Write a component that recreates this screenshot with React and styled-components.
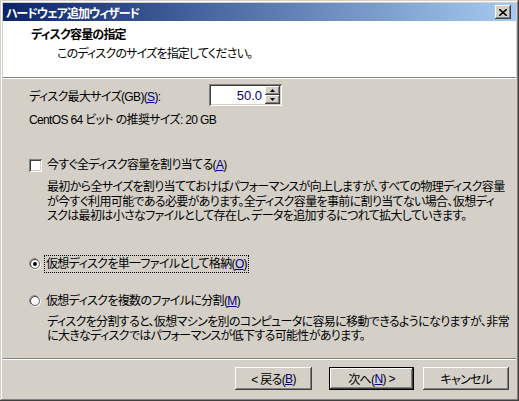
import React from 'react'
import styled, { createGlobalStyle, css } from 'styled-components'

const GlobalStyle = createGlobalStyle`
  html, body {
    margin: 0;
    padding: 0;
    background: #d4d0c8;
  }
  body {
    font-family: "Liberation Sans", "Noto Sans CJK JP", sans-serif;
    font-size: 12px;
    color: #000;
  }
`

const jp = css`
  font-family: "Liberation Sans", "Noto Sans CJK JP", sans-serif;
  font-feature-settings: "palt";
  font-size: 12px;
  letter-spacing: -0.65px;
  white-space: nowrap;
`

const Window = styled.div`
  width: 519px;
  height: 401px;
  box-sizing: border-box;
  padding: 3px;
  background: #d4d0c8;
  display: flex;
  flex-direction: column;
  box-shadow: inset -1px -1px #404040, inset 1px 1px #d4d0c8,
    inset -2px -2px #808080, inset 2px 2px #ffffff;
`

const TitleBar = styled.div`
  height: 18px;
  display: flex;
  align-items: center;
  justify-content: space-between;
  padding: 0 5px 0 3px;
  background: linear-gradient(to right, #0a246a, #a6caf0);
  color: #fff;
  font-weight: bold;
  ${jp};
  letter-spacing: -1px;
`

const CloseButton = styled.div`
  width: 16px;
  height: 14px;
  box-sizing: border-box;
  background: #d4d0c8;
  display: flex;
  align-items: center;
  justify-content: center;
  box-shadow: inset -1px -1px #404040, inset 1px 1px #ffffff,
    inset -2px -2px #808080;
`

const Header = styled.div`
  height: 56px;
  box-sizing: border-box;
  background: #fff;
  padding: 6px 0 0 28px;
  ${jp};
  letter-spacing: -0.8px;
`

const HeaderTitle = styled.div`
  font-weight: bold;
  line-height: 16px;
`

const HeaderSub = styled.div`
  margin: 3px 0 0 26px;
  line-height: 16px;
`

const Rule = styled.div`
  height: 0;
  border-top: 1px solid #808080;
  border-bottom: 1px solid #ffffff;
`

const Body = styled.div`
  flex: 1;
  display: flex;
  flex-direction: column;
  padding-left: 26px;
  ${jp};
`

const SizeRow = styled.div`
  margin-top: 5px;
  height: 22px;
  display: flex;
  align-items: center;
`

const SizeLabel = styled.span`
  width: 180px;
`

const SpinBox = styled.div`
  width: 73px;
  height: 22px;
  box-sizing: border-box;
  background: #fff;
  display: flex;
  align-items: center;
  padding: 2px;
  box-shadow: inset 1px 1px #808080, inset -1px -1px #ffffff,
    inset 2px 2px #404040, inset -2px -2px #d4d0c8;
`

const SpinValue = styled.span`
  flex: 1;
  text-align: right;
  padding-right: 3px;
  font-size: 13px;
  letter-spacing: 0;
  color: #000080;
`

const SpinButtons = styled.div`
  display: flex;
  flex-direction: column;
  width: 15px;
  height: 18px;
`

const SpinButton = styled.div`
  flex: 1;
  background: #d4d0c8;
  display: flex;
  align-items: center;
  justify-content: center;
  box-shadow: inset -1px -1px #404040, inset 1px 1px #ffffff,
    inset -2px -2px #808080;
`

const Line = styled.div`
  margin-top: ${(p) => p.$top || 0}px;
  line-height: 14px;
`

const OptionRow = styled.div`
  margin-top: ${(p) => p.$top}px;
  height: 18px;
  display: flex;
  align-items: center;
  gap: 3px;
`

const CheckBox = styled.div`
  width: 13px;
  height: 13px;
  box-sizing: border-box;
  background: #fff;
  box-shadow: inset 1px 1px #808080, inset -1px -1px #ffffff,
    inset 2px 2px #404040, inset -2px -2px #d4d0c8;
`

const OptionLabel = styled.span`
  line-height: 16px;
  padding: 0 1px;
  border: 1px dotted ${(p) => (p.$focus ? '#000' : 'transparent')};
`

const Desc = styled.div`
  margin: ${(p) => p.$top}px 0 0 18px;
  line-height: ${(p) => p.$lh}px;
`

const Key = styled.u`
  color: #000080;
`

const Footer = styled.div`
  height: 40px;
  display: flex;
  flex-direction: column;
`

const ButtonRow = styled.div`
  margin-top: 7px;
  display: flex;
  justify-content: flex-end;
  padding-right: 7px;
`

const Button = styled.div`
  width: ${(p) => p.$w}px;
  margin-left: ${(p) => p.$ml || 0}px;
  height: 23px;
  box-sizing: border-box;
  display: flex;
  align-items: center;
  justify-content: center;
  ${jp};
  background: #d4d0c8;
  box-shadow: ${(p) =>
    p.$default
      ? 'inset 0 0 0 1px #000, inset -2px -2px #404040, inset 2px 2px #ffffff, inset -3px -3px #808080'
      : 'inset -1px -1px #404040, inset 1px 1px #ffffff, inset -2px -2px #808080'};
`

const Radio = ({ checked }) => (
  <svg width="12" height="12" viewBox="0 0 12 12">
    <path d="M1.5 8.5 A5 5 0 0 1 8.5 1.5" stroke="#808080" strokeWidth="1" fill="none" />
    <path d="M10.5 3.5 A5 5 0 0 1 3.5 10.5" stroke="#ffffff" strokeWidth="1" fill="none" />
    <circle cx="6" cy="6" r="4.5" fill="#fff" stroke="#404040" strokeWidth="1" />
    <path d="M9.2 3.6 A4 4 0 0 1 3.6 9.2" stroke="#d4d0c8" strokeWidth="1" fill="none" />
    {checked && <circle cx="6" cy="6" r="2" fill="#000" />}
  </svg>
)

const Arrow = ({ up }) => (
  <svg width="5" height="3" viewBox="0 0 5 3">
    <path d={up ? 'M0 3 L2.5 0 L5 3 Z' : 'M0 0 L5 0 L2.5 3 Z'} fill="#000" />
  </svg>
)

export default function App() {
  return (
    <>
      <GlobalStyle />
      <Window>
        <TitleBar>
          <span>ハードウェア追加ウィザード</span>
          <CloseButton>
            <svg width="8" height="7" viewBox="0 0 8 7">
              <path d="M0 0 L8 7 M8 0 L0 7" stroke="#000" strokeWidth="1.6" />
            </svg>
          </CloseButton>
        </TitleBar>
        <Header>
          <HeaderTitle>ディスク容量の指定</HeaderTitle>
          <HeaderSub>このディスクのサイズを指定してください。</HeaderSub>
        </Header>
        <Rule />
        <Body>
          <SizeRow>
            <SizeLabel>
              ディスク最大サイズ(GB)(<Key>S</Key>):
            </SizeLabel>
            <SpinBox>
              <SpinValue>50.0</SpinValue>
              <SpinButtons>
                <SpinButton>
                  <Arrow up />
                </SpinButton>
                <SpinButton>
                  <Arrow />
                </SpinButton>
              </SpinButtons>
            </SpinBox>
          </SizeRow>
          <Line $top={7}>CentOS 64 ビット の推奨サイズ: 20 GB</Line>
          <OptionRow $top={29}>
            <CheckBox />
            <OptionLabel>
              今すぐ全ディスク容量を割り当てる(<Key>A</Key>)
            </OptionLabel>
          </OptionRow>
          <Desc $top={6} $lh={14.5}>
            最初から全サイズを割り当てておけばパフォーマンスが向上しますが、すべての物理ディスク容量
            <br />
            が今すぐ利用可能である必要があります。全ディスク容量を事前に割り当てない場合、仮想ディ
            <br />
            スクは最初は小さなファイルとして存在し、データを追加するにつれて拡大していきます。
          </Desc>
          <OptionRow $top={31}>
            <Radio checked />
            <OptionLabel $focus>
              仮想ディスクを単一ファイルとして格納(<Key>O</Key>)
            </OptionLabel>
          </OptionRow>
          <OptionRow $top={19}>
            <Radio />
            <OptionLabel>
              仮想ディスクを複数のファイルに分割(<Key>M</Key>)
            </OptionLabel>
          </OptionRow>
          <Desc $top={5} $lh={14}>
            ディスクを分割すると、仮想マシンを別のコンピュータに容易に移動できるようになりますが、非常
            <br />
            に大きなディスクではパフォーマンスが低下する可能性があります。
          </Desc>
        </Body>
        <Footer>
          <Rule />
          <ButtonRow>
            <Button $w={77}>
              &lt; 戻る(<Key>B</Key>)
            </Button>
            <Button $w={85} $ml={17} $default>
              次へ(<Key>N</Key>) &gt;
            </Button>
            <Button $w={86} $ml={9}>
              キャンセル
            </Button>
          </ButtonRow>
        </Footer>
      </Window>
    </>
  )
}
